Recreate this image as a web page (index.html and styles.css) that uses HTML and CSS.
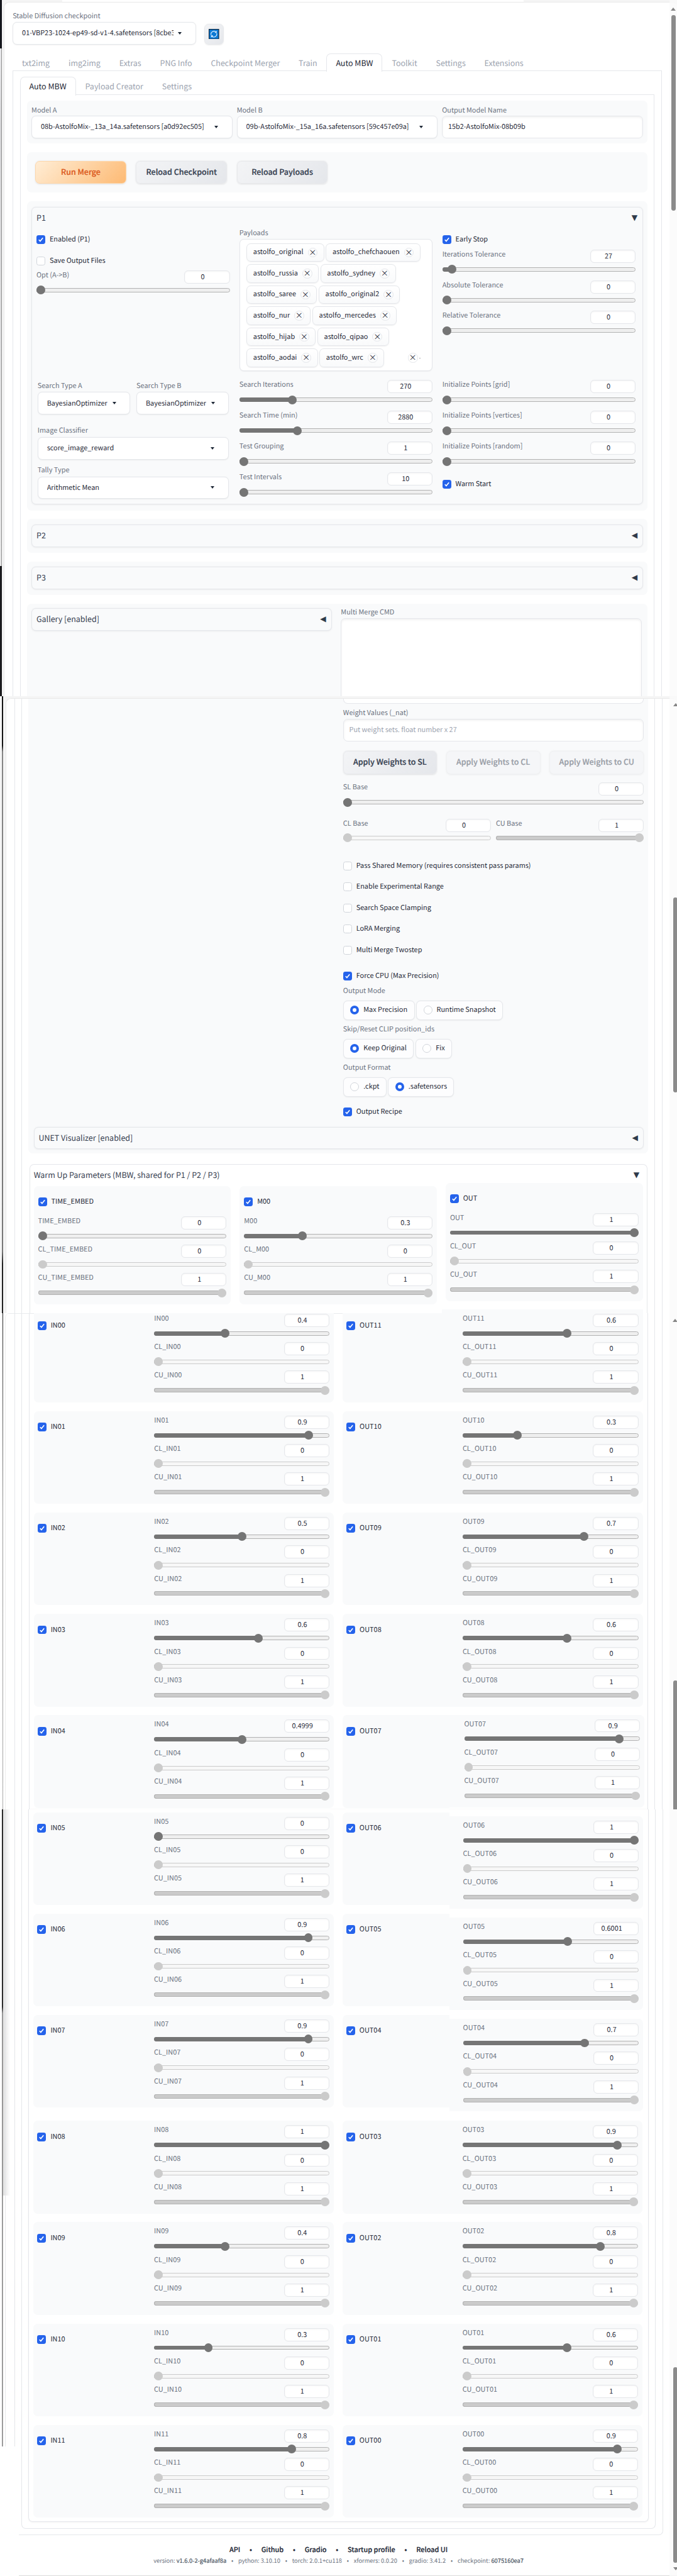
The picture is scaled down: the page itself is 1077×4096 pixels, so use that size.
FILE: index.html
```html
<!DOCTYPE html>
<html lang="en">
<head>
<meta charset="utf-8">
<title>Stable Diffusion</title>
<link rel="stylesheet" href="styles.css">
</head>
<body>
<div class="page">
  <div class="rail-left"><i class="l1"></i><i class="l2"></i><i class="l3"></i><i class="l4"></i><i class="l5"></i><i class="l6"></i></div>

  <main class="content">
    <section class="view view-a">
      <div class="window-top"></div>
      <div class="window">
        <div class="label checkpoint-label">Stable Diffusion checkpoint</div>
        <div class="checkpoint-row">
          <div class="sel checkpoint"><span>01-VBP23-1024-ep49-sd-v1-4.safetensors [8cbe3</span></div>
          <div class="refresh"><svg viewBox="0 0 18 18"><rect x=".6" y=".6" width="16.8" height="16.8" fill="#0b79d4" stroke="#10263c" stroke-width="1.2"/><path d="M4.300 10.500A5 5 0 0 1 12.800 5.700M13.700 7.500A5 5 0 0 1 5.200 12.300M13.300 3.500v2.700h-2.700M4.700 14.500v-2.700h2.700" fill="none" stroke="#e4f2ff" stroke-width="1.200"/></svg></div>
        </div>
        <nav class="tabs"><b>txt2img</b><b>img2img</b><b>Extras</b><b>PNG Info</b><b>Checkpoint Merger</b><b>Train</b><b class="active">Auto MBW</b><b>Toolkit</b><b>Settings</b><b>Extensions</b></nav>
        <div class="frame frame-a1">
          <nav class="tabs"><b class="active">Auto MBW</b><b>Payload Creator</b><b>Settings</b></nav>
          <div class="frame frame-a2">
            <div class="block models">
              <div><div class="label">Model A</div><div class="sel"><span>08b-AstolfoMix-_13a_14a.safetensors [a0d92ec505]</span></div></div>
              <div><div class="label">Model B</div><div class="sel"><span>09b-AstolfoMix-_15a_16a.safetensors [59c457e09a]</span></div></div>
              <div><div class="label">Output Model Name</div><div class="input">15b2-AstolfoMix-08b09b</div></div>
            </div>
            <div class="block actions"><div class="btn primary">Run Merge</div><div class="btn">Reload Checkpoint</div><div class="btn">Reload Payloads</div></div>
            <div class="block p1-block">
              <div class="accordion">
                <div class="acc-title"><span>P1</span><em>▼</em></div>
                <div class="p1-grid">
                  <div class="p1-enable">
                    <div class="ck on">Enabled (P1)</div>
                    <div class="ck">Save Output Files</div>
                    <div class="sl" data-l="Opt (A-&gt;B)" data-v="0" data-p="0"></div>
                  </div>
                  <div class="p1-payloads">
                    <div class="label">Payloads</div>
                    <div class="chips"><u>astolfo_original</u><u>astolfo_chefchaouen</u><u>astolfo_russia</u><u>astolfo_sydney</u><u>astolfo_saree</u><u>astolfo_original2</u><u>astolfo_nur</u><u>astolfo_mercedes</u><u>astolfo_hijab</u><u>astolfo_qipao</u><u>astolfo_aodai</u><u>astolfo_wrc</u><div class="clear"></div></div>
                  </div>
                  <div class="p1-stop">
                    <div class="ck on">Early Stop</div>
                    <div class="sl" data-l="Iterations Tolerance" data-v="27" data-p="0.027"></div>
                    <div class="sl" data-l="Absolute Tolerance" data-v="0" data-p="0"></div>
                    <div class="sl" data-l="Relative Tolerance" data-v="0" data-p="0"></div>
                  </div>
                  <div class="p1-types">
                    <div class="pair">
                      <div><div class="label">Search Type A</div><div class="sel"><span>BayesianOptimizer</span></div></div>
                      <div><div class="label">Search Type B</div><div class="sel"><span>BayesianOptimizer</span></div></div>
                    </div>
                    <div class="label classifier">Image Classifier</div><div class="sel"><span>score_image_reward</span></div>
                    <div class="label tally">Tally Type</div><div class="sel"><span>Arithmetic Mean</span></div>
                  </div>
                  <div class="p1-search">
                    <div class="sl" data-l="Search Iterations" data-v="270" data-p="0.264"></div>
                    <div class="sl" data-l="Search Time (min)" data-v="2880" data-p="0.29"></div>
                    <div class="sl" data-l="Test Grouping" data-v="1" data-p="0"></div>
                    <div class="sl" data-l="Test Intervals" data-v="10" data-p="0"></div>
                  </div>
                  <div class="p1-search">
                    <div class="sl" data-l="Initialize Points [grid]" data-v="0" data-p="0"></div>
                    <div class="sl" data-l="Initialize Points [vertices]" data-v="0" data-p="0"></div>
                    <div class="sl" data-l="Initialize Points [random]" data-v="0" data-p="0"></div>
                    <div class="ck on warm">Warm Start</div>
                  </div>
                </div>
              </div>
            </div>
            <div class="block closed"><div class="accordion"><div class="acc-title"><span>P2</span><em>◀</em></div></div></div>
            <div class="block closed"><div class="accordion"><div class="acc-title"><span>P3</span><em>◀</em></div></div></div>
            <div class="block gallery-block">
              <div class="accordion"><div class="acc-title"><span>Gallery [enabled]</span><em>◀</em></div></div>
              <div><div class="label">Multi Merge CMD</div><div class="input area"></div></div>
            </div>
          </div>
        </div>
      </div>
    </section>

    <section class="view view-b">
      <div class="window-top"></div>
      <div class="window">
        <div class="frame frame-b1"><div class="frame frame-b2">
          <div class="options-block">
            <div class="options">
              <div class="area-end"></div>
              <div class="label">Weight Values (_nat)</div>
              <div class="input placeholder">Put weight sets. float number x 27</div>
              <div class="apply"><div class="btn">Apply Weights to SL</div><div class="btn off">Apply Weights to CL</div><div class="btn off">Apply Weights to CU</div></div>
              <div class="sl" data-l="SL Base" data-v="0" data-p="0"></div>
              <div class="bases"><div class="sl off" data-l="CL Base" data-v="0" data-p="0"></div><div class="sl off" data-l="CU Base" data-v="1" data-p="1"></div></div>
              <div class="flags">
                <div class="ck">Pass Shared Memory (requires consistent pass params)</div>
                <div class="ck">Enable Experimental Range</div>
                <div class="ck">Search Space Clamping</div>
                <div class="ck">LoRA Merging</div>
                <div class="ck">Multi Merge Twostep</div>
              </div>
              <div class="ck on force">Force CPU (Max Precision)</div>
              <div class="label">Output Mode</div>
              <div class="radios"><s class="on">Max Precision</s><s>Runtime Snapshot</s></div>
              <div class="label">Skip/Reset CLIP position_ids</div>
              <div class="radios"><s class="on">Keep Original</s><s>Fix</s></div>
              <div class="label">Output Format</div>
              <div class="radios"><s>.ckpt</s><s class="on">.safetensors</s></div>
              <div class="ck on recipe">Output Recipe</div>
            </div>
            <div class="accordion unet"><div class="acc-title"><span>UNET Visualizer [enabled]</span><em>◀</em></div></div>
          </div>
          <div class="warm-up">
            <div class="acc-title"><span>Warm Up Parameters (MBW, shared for P1 / P2 / P3)</span><em>▼</em></div>
            <div class="warm-grid">
              <div class="card"><div class="ck on">TIME_EMBED</div><div class="sl" data-l="TIME_EMBED" data-v="0" data-p="0"></div><div class="sl off" data-l="CL_TIME_EMBED" data-v="0" data-p="0"></div><div class="sl off" data-l="CU_TIME_EMBED" data-v="1" data-p="1"></div></div>
              <div class="card"><div class="ck on">M00</div><div class="sl" data-l="M00" data-v="0.3" data-p="0.3"></div><div class="sl off" data-l="CL_M00" data-v="0" data-p="0"></div><div class="sl off" data-l="CU_M00" data-v="1" data-p="1"></div></div>
              <div class="card raised"><div class="ck on">OUT</div><div class="sl" data-l="OUT" data-v="1" data-p="1"></div><div class="sl off" data-l="CL_OUT" data-v="0" data-p="0"></div><div class="sl off" data-l="CU_OUT" data-v="1" data-p="1"></div></div>
            </div>
          </div>
        </div></div>
      </div>
    </section>

    <section class="view view-c">
      <div class="frame frame-c1"><div class="frame frame-c2"><div class="frame frame-c3" id="rows-top"></div></div></div>
    </section>

    <section class="view view-d">
      <div class="frame frame-d1"><div class="frame frame-d2"><div class="frame frame-d3" id="rows-bottom"></div></div></div>
    </section>

    <footer>
      <div class="links"><span>API</span><i>•</i><span>Github</span><i>•</i><span>Gradio</span><i>•</i><span>Startup profile</span><i>•</i><span>Reload UI</span></div>
      <div class="versions"><span>version: <b>v1.6.0-2-g4afaaf8a</b></span><i>•</i><span>python: 3.10.10</span><i>•</i><span>torch: 2.0.1+cu118</span><i>•</i><span>xformers: 0.0.20</span><i>•</i><span>gradio: 3.41.2</span><i>•</i><span>checkpoint: <b>6075160ea7</b></span></div>
    </footer>
  </main>

  <div class="rail-right"><i class="up u1"></i><i class="thumb t1"></i><i class="up u2"></i><i class="thumb t2"></i><i class="up u3"></i><i class="thumb t3"></i><i class="thumb t4"></i><i class="down"></i></div>
</div>
<script src="app.js"></script>
</body>
</html>
```
FILE: app.js
```js
const slider = (label, value, off) =>
  `<div class="sl${off ? " off" : ""}" data-l="${label}" data-v="${value}" data-p="${value}"></div>`;

const half = (name, value) => `
  <div class="name"><div class="ck on">${name}</div></div>
  <div class="vals">${slider(name, value)}${slider("CL_" + name, 0, true)}${slider("CU_" + name, 1, true)}</div>`;

const row = ([inName, inValue, outName, outValue, shift]) => `
  <div class="row ${shift || ""}">
    <div class="layer">${half(inName, inValue)}</div>
    <div class="layer out">${half(outName, outValue)}</div>
  </div>`;

document.getElementById("rows-top").innerHTML = [
  ["IN00", "0.4", "OUT11", "0.6", "first"],
  ["IN01", "0.9", "OUT10", "0.3"],
  ["IN02", "0.5", "OUT09", "0.7"],
  ["IN03", "0.6", "OUT08", "0.6"],
  ["IN04", "0.4999", "OUT07", "0.9", "nudge"],
].map(row).join("");

document.getElementById("rows-bottom").innerHTML = [
  ["IN05", "0", "OUT06", "1", "drop"],
  ["IN06", "0.9", "OUT05", "0.6001", "drop"],
  ["IN07", "0.9", "OUT04", "0.7", "drop"],
  ["IN08", "1", "OUT03", "0.9", "spaced"],
  ["IN09", "0.4", "OUT02", "0.8"],
  ["IN10", "0.3", "OUT01", "0.6"],
  ["IN11", "0.8", "OUT00", "0.9"],
].map(row).join("");

document.querySelectorAll(".sl").forEach((el) => {
  el.innerHTML = `<div class="sl-head"><span class="label">${el.dataset.l.replace(">", "&gt;")}</span><span class="num">${el.dataset.v}</span></div>
    <div class="range" style="--v:${el.dataset.p}"><div class="fill"></div><div class="knob"></div></div>`;
});

document.querySelectorAll(".chips u").forEach((el) => {
  el.innerHTML = `<span>${el.textContent}</span><i class="x">×</i>`;
});
document.querySelector(".clear").innerHTML = '<i class="x">×</i><i class="caret-s"></i>';

document.querySelectorAll(".ck.on").forEach((el) => {
  el.insertAdjacentHTML("afterbegin", '<svg viewBox="0 0 16 16"><path d="M4.300 8.300l2.500 2.500 4.900-5.900" fill="none" stroke="#fff" stroke-width="1.900"/></svg>');
});
document.querySelectorAll(".ck:not(.on)").forEach((el) => {
  el.insertAdjacentHTML("afterbegin", '<i class="box"></i>');
});
```
FILE: styles.css
```css
*, *::before, *::after { box-sizing: border-box; }
html, body { margin: 0; background: #fff; overflow: hidden; }
i, b, u, s, em { font-style: normal; font-weight: inherit; text-decoration: none; display: block; }

.page {
  zoom: 0.8714;
  width: 1236px; height: 4700px;
  display: grid; overflow: hidden;
  font-family: "Noto Sans CJK JP", "Noto Sans CJK SC", sans-serif;
  font-size: 12.53px; line-height: 20px; color: #1f2937;
  text-rendering: geometricPrecision; white-space: nowrap;
}
.page > * { grid-area: 1 / 1; }

/* window edges on the left */
.rail-left { display: flex; flex-direction: column; z-index: 3; width: 28px; }
.l1 { height: 88px; width: 3px; background: #14161c; }
.l2 { height: 945px; width: 4px; background: linear-gradient(#e8e8ea, #d4d4d6 15%, #e6e6e6); border-right: 1px solid #909090; }
.l3 { height: 237px; width: 3px; background: #1b1b1e; }
.l4 { height: 1126px; width: 2px; margin-left: 4px; background: linear-gradient(#151515 8%, #858585 9%, #777 90%, #222 92%); }
.l5 { height: 906px; width: 1px; margin-left: 5px; background: linear-gradient(#222, #999 40%, #aaa); }
.l6 { height: 1162px; width: 23px; margin-left: 4px; border-right: 1px solid #e4e5e8;
  background: linear-gradient(#111 31%, #8d8d8d 32%) 0 0 / 2px 100% no-repeat,
    linear-gradient(#e4e5e8, #e4e5e8) 5px 0 / 1px 100% no-repeat,
    linear-gradient(90deg, #dedede 2px, #e9e9e9 6px, #fff 15px) 0 0 / 15px 705px no-repeat; }

/* scrollbars on the right */
.rail-right { display: flex; flex-direction: column; z-index: 3; width: 15px; justify-self: end; align-items: center; background: linear-gradient(90deg, rgba(250,250,250,.8), rgba(250,250,250,.8)); }
.up, .down { width: 0; height: 6px; border: 5px solid transparent; border-top: 0; border-bottom: 6px solid #868686; flex: none; }
.down { border-bottom: 0; border-top: 6px solid #868686; margin: 8px 0 0 7px; }
.thumb { width: 8px; border-radius: 4px; background: #8b8b8b; flex: none; }
.u1 { margin-top: 14px; }
.t1 { margin-top: 8px; height: 356px; }
.u2 { margin: 899px 0 0 7px; }
.t2 { margin: 349px 0 0 7px; height: 356px; }
.u3 { margin: 412px 0 0 6px; }
.t3 { margin: 654px 0 0 6px; height: 236px; border-radius: 4px 4px 0 0; }
.t4 { margin: 1018px 0 0 7px; height: 356px; }

/* shared controls */
.label { color: #6b7280; height: 20px; line-height: 18px; }
.sel, .input { height: 41px; border: 1px solid #e5e7eb; border-radius: 8px; background: #fff; color: #1f2937; line-height: 38px; }
.sel { display: flex; justify-content: space-between; align-items: center; padding: 0 25px 0 16px; box-shadow: 0 1px 2px rgba(0,0,0,.06); }
.sel::after { content: ""; border: 4px solid transparent; border-top: 5px solid #1f2937; border-bottom: 0; }
.sel span { overflow: hidden; }
.input { padding: 0 10px; box-shadow: inset 0 2px 4px rgba(0,0,0,.06); }
.placeholder { color: #9ca3af; }
.block { background: #f9fafb; border-radius: 8px; }
.accordion { border: 1px solid #e5e7eb; border-radius: 8px; box-shadow: 0 1px 3px rgba(0,0,0,.06); background: #f9fafb; }
.acc-title { display: flex; justify-content: space-between; align-items: center; height: 38px; padding: 0 9px 0 8px; font-size: 14.32px; color: #374151; }
.acc-title span { line-height: 36px; }
.acc-title em { font: 14px/20px "DejaVu Sans", sans-serif; color: #2f3a49; }
.btn { border: 1px solid #e8e9ec; border-radius: 8px; background: linear-gradient(135deg, #f3f4f6, #e5e7eb); box-shadow: 0 1px 3px rgba(0,0,0,.1); font-size: 14.32px; font-weight: 500; color: #374151; text-align: center; line-height: 38px; -webkit-text-stroke: .25px; }
.primary { background: linear-gradient(135deg, #ffedd5, #fdba74); border-color: #fed7aa; color: #dc5a20; }
.btn.off { opacity: .5; background: #f3f4f6; }

.ck { height: 16px; display: flex; align-items: center; gap: 8px; line-height: 16px; color: #1f2937; }
.ck svg, .ck .box { width: 16px; height: 16px; border-radius: 4px; flex: none; }
.ck svg { background: #2563eb; }
.ck .box { background: #fff; border: 1px solid #d1d5db; }

.sl { height: 44px; }
.sl-head { display: flex; justify-content: space-between; height: 24px; }
.num { width: 83px; height: 24px; border: 1px solid #e5e7eb; border-radius: 7px; background: #fff; text-align: center; padding-right: 16px; line-height: 22px; box-shadow: inset 0 1px 3px rgba(0,0,0,.05); }
.range { margin-top: 4px; height: 16px; display: grid; align-items: center; }
.range > * { grid-area: 1 / 1; }
.range::before { content: ""; grid-area: 1 / 1; height: 8px; border: 1px solid #b2b2b2; border-radius: 4px; background: #efefef; }
.fill { height: 8px; border-radius: 4px 0 0 4px; background: #757575; width: calc(8px + var(--v) * (100% - 16px)); }
.knob { width: 16px; height: 16px; border-radius: 50%; background: #757575; margin-left: calc(var(--v) * (100% - 16px)); }
.off .range::before { border-color: #cbcbcb; background: #f7f7f7; }
.off .fill { background: #cbcbcb; border: solid #b2b2b2; border-width: 1px 0 1px 1px; }
.off .knob { background: #cbcbcb; }

.tabs { display: flex; font-size: 14.32px; color: #9ca3af; height: 32px; }
.tabs b { padding: 0 16px; border: 1px solid transparent; border-bottom: 0; line-height: 34px; height: 32px; }
.tabs .active { color: #1f2937; border-color: #e5e7eb; border-radius: 8px 8px 0 0; background: #fff; height: 34px; z-index: 1; }
.frame { border: 0 solid #e5e7eb; }

/* first view */
.content { display: flex; flex-direction: column; }
.view { flex: none; }
.view-a { height: 1270px; overflow: hidden; background: #f5f5f5; }
.window-top { height: 4px; }
.view-a .window-top { margin: 0 281px 1px 114px; height: 3px; background: #fff; }
.window { border: 1px solid #e9e9e9; background: #fff; border-radius: 10px 10px 0 0; }
.view-a .window { margin-left: 7px; margin-top: 1px; padding: 15px 29px 0 15px; height: 1280px; border-right: 0; }
.checkpoint-row { display: flex; align-items: flex-end; gap: 15px; }
.checkpoint { width: 335px; }
.checkpoint span { width: 277px; }
.refresh { width: 35px; height: 38px; border: 1px solid #e8e9ec; border-radius: 8px; background: linear-gradient(135deg, #f3f4f6, #e5e7eb); display: grid; place-items: center; box-shadow: 0 1px 2px rgba(0,0,0,.08); }
.refresh svg { width: 19px; height: 19px; }
.view-a .window > .tabs { margin-top: 16px; }
.frame-a1 { border-width: 1px 1px 0; padding: 10px 12px 0; }
.frame-a2 { border-width: 1px 1px 0; padding: 10px 12px 0; height: 1200px; }
.models { height: 78px; margin-bottom: 16px; padding: 8px; display: grid; grid-template-columns: 1fr 1fr 1fr; gap: 8px; }
.models .label { line-height: 19px; }
.actions { height: 74px; margin-bottom: 16px; padding: 16px 15px; display: flex; gap: 18px; }
.actions .btn { width: 166px; height: 42px; }
.p1-block { height: 564px; padding: 10px 8px; margin-bottom: 16px; }
.p1-block .accordion { height: 543px; }
.p1-grid { display: grid; grid-template-columns: repeat(3, 353px); column-gap: 17.500px; grid-template-rows: 277px 220px; padding: 0 8px; }
.p1-enable { padding-top: 13px; }
.p1-enable .ck + .ck { margin: 23px 0 9px; }
.chips { height: 241px; border: 1px solid #e5e7eb; border-radius: 8px; background: #fff; padding: 6px 12px; display: flex; flex-wrap: wrap; align-content: flex-start; gap: 4.500px 3px; box-shadow: 0 1px 2px rgba(0,0,0,.05); }
.chips u { height: 34px; border: 1px solid #e5e7eb; border-radius: 8px; padding: 0 11px; display: flex; align-items: center; gap: 8px; background: linear-gradient(#fff, #f9fafb); box-shadow: 0 1px 2px rgba(0,0,0,.06); line-height: 32px; }
.x { width: 18px; height: 18px; border: 1px solid #e5e7eb; border-radius: 50%; text-align: center; line-height: 15px; font-size: 14px; }
.clear { margin-left: auto; display: flex; align-items: center; gap: 3px; padding-right: 9px; }
.caret-s { border: 2px solid transparent; border-top: 2px solid #555; border-bottom: 0; }
.p1-stop { padding-top: 13px; display: flex; flex-direction: column; gap: 12px; }
.p1-stop .ck { margin-bottom: -2px; }
.p1-types { padding: 2px 2px 0; }
.pair { display: grid; grid-template-columns: 1fr 1fr; gap: 12px; }
.pair .sel { padding-right: 24px; }
.classifier { margin-top: 21px; }
.tally { margin-top: 11px; }
.p1-search { display: flex; flex-direction: column; gap: 12.300px; }
.warm { margin-top: 13px; }
.closed { height: 61px; padding: 10px 8px; margin-bottom: 16px; }
.closed .accordion { height: 41px; }
.gallery-block { height: 400px; padding: 9px 8px; display: grid; grid-template-columns: 548px 549px; gap: 17px; }
.gallery-block .accordion { height: 41px; }
.gallery-block .label { height: 18px; line-height: 15px; }
.area { height: 300px; }

/* second view */
.view-b { height: 1126px; overflow: hidden; background: #f5f5f5; }
.view-b .window { margin-left: 10px; height: 1140px; padding: 0 28px 0 15px; border-right: 0; }
.frame-b1 { border-width: 0 1px; padding: 0 12px; width: 1183px; }
.frame-b2 { border-width: 0 1px; padding: 0 12px 0 11px; height: 1130px; }
.options-block { background: #f9fafb; height: 829px; border-radius: 0 0 8px 8px; padding: 0 8px 0 10px; }
.options { width: 549px; margin-left: 565px; height: 781px; }
.area-end { height: 9px; border: 1px solid #e5e7eb; border-top: 0; border-radius: 0 0 8px 8px; background: #fff; }
.area-end + .label { margin-top: 8px; line-height: 18px; }
.apply { display: grid; grid-template-columns: 171px 172px 172px; gap: 17px; margin: 17px 0 16px; }
.apply .btn { height: 42px; }
.bases { display: grid; grid-template-columns: 270px 270px; gap: 9px; margin-top: 22px; }
.bases .range { margin-top: 3px; }
.flags { display: flex; flex-direction: column; gap: 22.500px; margin-top: 34px; }
.force { margin: 31px 0 10px; }
.options .force + .label { margin-top: 0; height: 27px; line-height: 18px; }
.radios { display: flex; gap: 3px; }
.radios + .label { height: 35px; line-height: 33px; }
.radios s { height: 35px; border: 1px solid #e5e7eb; border-radius: 8px; background: #fdfdfe; padding: 0 12px; display: flex; align-items: center; gap: 8px; line-height: 32px; box-shadow: 0 1px 2px rgba(0,0,0,.06); }
.radios s::before { content: ""; width: 16px; height: 16px; border: 1px solid #d1d5db; border-radius: 50%; background: #fff; flex: none; }
.radios .on::before { border: 5px solid #2563eb; }
.recipe { margin-top: 20px; }
.unet { height: 40px; }
.warm-up { margin: 20px 0 0 2px; border: 1px solid #e5e7eb; border-bottom: 0; border-radius: 8px 8px 0 0; height: 400px; width: 1129px; padding: 0 8px 0 7px; }
.warm-up .acc-title { padding: 0 6px 0 0; height: 39px; }
.warm-grid { display: grid; grid-template-columns: 360px 360px 360px; gap: 16px; }
.card { background: #f9fafb; border-radius: 8px; height: 216px; padding: 21px 8px; display: flex; flex-direction: column; gap: 8px; }
.card .ck { margin-bottom: 10px; }
.raised { margin-top: -6px; }

/* third and fourth views */
.view-c { height: 906px; margin-left: 9px; padding: 0 28px 0 16px; background: linear-gradient(#e5e7eb, #e5e7eb) 0 0 / 798px 1px no-repeat; border-left: 1px solid #ececec; border-top-left-radius: 8px; }
.frame-c1 { border-width: 0 1px; padding: 0 12px; }
.frame-c2 { border-width: 0 1px; padding: 0 12px; }
.frame-c3 { border-width: 0 1px; padding: 0 8px; height: 906px; }
.row { display: grid; grid-template-columns: 548px 548px; gap: 16px; height: 169px; margin-bottom: 16px; }
.layer { display: flex; }
.layer > * { background: #f9fafb; height: 169px; }
.name { width: 200px; padding: 21px 7px 0; border-radius: 8px 0 0 8px; }
.vals { flex: 1; padding: 8px 8px 0 20px; display: flex; flex-direction: column; gap: 8px; border-radius: 0 8px 8px 0; }
.out .vals { padding-left: 19px; }
.first { height: 163px; }
.first .layer > * { height: 163px; padding-top: 1px; border-top-left-radius: 0; border-top-right-radius: 0; }
.first .layer > .name { padding-top: 15px; }
.first .out .name { width: 181px; }
.first .layer.out > .vals { margin-top: -7px; padding-top: 8px; padding-left: 38px; height: 170px; }
.nudge .out .name, .drop .out .name { width: 195px; }
.nudge .out .vals { margin: -1px -3px 0 0; padding-left: 27px; }
.drop .out .vals { margin: 7px -1px -7px 0; padding-left: 25px; }
.row.spaced { margin-top: 24px; }
.view-d { height: 1324px; padding: 0 27px 0 34px; }
.frame-d1 { border-width: 0 1px 1px 0; border-radius: 0 0 8px 0; padding: 0 12px 10px 5px; height: 1324px; }
.frame-d2 { border-width: 0 1px 1px; border-radius: 0 0 8px 8px; padding: 0 12px 12px; height: 1313px; }
.frame-d3 { border-width: 0 1px 1px; border-radius: 0 0 8px 8px; padding: 5px 8px 0; height: 1300px; box-shadow: 0 1px 3px rgba(0,0,0,.05); }

footer { height: 74px; margin-left: 34px; border-bottom: 2px solid #dcdcdc; padding-top: 16px; }
.links, .versions { display: flex; justify-content: center; margin-right: 35px; }
.links { font-weight: 500; -webkit-text-stroke: .25px; gap: 17px; line-height: 21px; }
.versions { font-size: 10.700px; color: #6b7280; gap: 9px; line-height: 20px; }
.versions b { display: inline; color: #4b5563; -webkit-text-stroke: .2px; }
```
